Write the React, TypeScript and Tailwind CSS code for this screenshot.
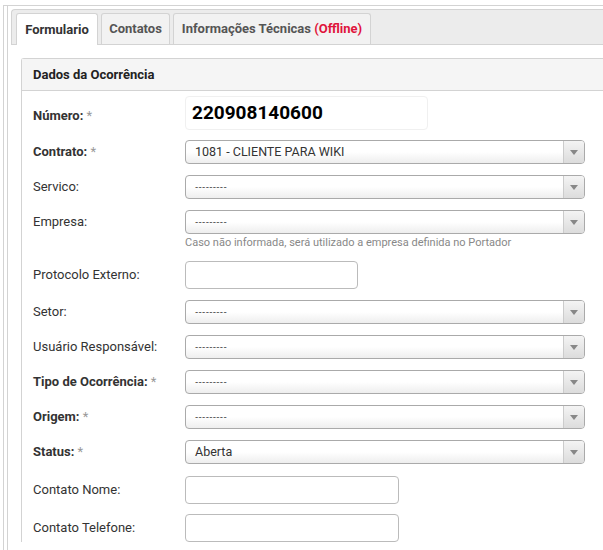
import React from 'react';

type Row = {
  label: string;
  required?: boolean;
  kind: 'select' | 'input';
  value?: string;
  width?: string;
  mt: string;
  help?: string;
};

const rows: Row[] = [
  { label: 'Contrato:', required: true, kind: 'select', value: '1081 - CLIENTE PARA WIKI', mt: 'mt-[10px]' },
  { label: 'Servico:', kind: 'select', value: '---------', mt: 'mt-[11px]' },
  {
    label: 'Empresa:',
    kind: 'select',
    value: '---------',
    mt: 'mt-[11px]',
    help: 'Caso não informada, será utilizado a empresa definida no Portador',
  },
  { label: 'Protocolo Externo:', kind: 'input', width: 'w-[173px]', mt: 'mt-[11px]' },
  { label: 'Setor:', kind: 'select', value: '---------', mt: 'mt-[11px]' },
  { label: 'Usuário Responsável:', kind: 'select', value: '---------', mt: 'mt-[11px]' },
  { label: 'Tipo de Ocorrência:', required: true, kind: 'select', value: '---------', mt: 'mt-[11px]' },
  { label: 'Origem:', required: true, kind: 'select', value: '---------', mt: 'mt-[11px]' },
  { label: 'Status:', required: true, kind: 'select', value: 'Aberta', mt: 'mt-[11px]' },
  { label: 'Contato Nome:', kind: 'input', width: 'w-[214px]', mt: 'mt-[12px]' },
  { label: 'Contato Telefone:', kind: 'input', width: 'w-[214px]', mt: 'mt-[10px]' },
];

function Label({ text, required, extra = '' }: { text: string; required?: boolean; extra?: string }) {
  return (
    <div className={`w-[152px] shrink-0 text-[13px] text-[#333] ${required ? 'font-bold' : ''} ${extra}`}>
      {text}
      {required && <span className="font-normal text-[#999]"> *</span>}
    </div>
  );
}

function Select({ value }: { value: string }) {
  const dashes = value.startsWith('---');
  return (
    <div className="flex h-[24px] w-[400px] items-stretch overflow-hidden rounded-[4px] border border-[#aaa] bg-gradient-to-b from-white from-50% to-[#eee]">
      <div
        className={`flex flex-1 items-center pl-[9px] text-[#333] ${
          dashes ? "pt-[2px] font-['DejaVu_Sans',sans-serif] text-[9px] tracking-[0.3px]" : 'text-[12.5px]'
        }`}
      >
        {value}
      </div>
      <div className="flex w-[21px] items-center justify-center border-l border-[#ccc] bg-gradient-to-b from-[#f4f4f4] to-[#dcdcdc]">
        <svg width="8" height="5" viewBox="0 0 8 5">
          <path d="M0 0 L8 0 L4 5 Z" fill="#888" />
        </svg>
      </div>
    </div>
  );
}

export default function App() {
  return (
    <div className="h-[550px] w-[603px] overflow-hidden bg-white font-['Roboto',sans-serif]">
      <div className="ml-[3px] mt-[5px] h-[600px] border-l border-t border-[#d3d3d3] pl-[3px]">
        <div className="h-full border-l border-[#d3d3d3] pl-[3px] pt-[3px]">
          {/* tabs */}
          <div className="flex h-[36px] items-end gap-[3px] rounded-tl-[4px] border border-r-0 border-[#d3d3d3] bg-[#ececec] pl-[4px]">
            <div className="-mb-px flex h-[32px] w-[82px] items-center justify-center rounded-t-[3px] border border-b-0 border-[#d3d3d3] bg-white text-[13px] font-bold text-[#333]">
              Formulario
            </div>
            <div className="flex h-[31px] w-[69px] items-center justify-center rounded-t-[3px] border border-b-0 border-[#d3d3d3] bg-[#f2f2f2] text-[13px] font-bold text-[#555]">
              Contatos
            </div>
            <div className="flex h-[31px] w-[198px] items-center justify-center rounded-t-[3px] border border-b-0 border-[#d3d3d3] bg-[#f2f2f2] text-[13px] font-bold text-[#555]">
              Informações Técnicas&nbsp;<span className="text-[#e0143c]">(Offline)</span>
            </div>
          </div>

          {/* panel */}
          <div className="ml-[10px] mt-[13px] rounded-tl-[3px] border border-r-0 border-b-0 border-[#d3d3d3]">
            <div className="flex h-[32px] items-center border-b border-[#d3d3d3] bg-[#f5f5f5] pl-[11px] text-[13px] font-bold text-[#222]">
              Dados da Ocorrência
            </div>
            <div className="pl-[11px] pt-[5px]">
              <div className="flex h-[34px] items-center">
                <Label text="Número:" required extra="mt-[6px]" />
                <div className="flex h-[34px] w-[243px] items-center rounded-[4px] border border-[#f0f0f0] pl-[6px] pt-[1px] text-[19px] font-bold text-black">
                  220908140600
                </div>
              </div>
              {rows.map((r) => (
                <div key={r.label} className={r.mt}>
                  <div className="flex items-center">
                    <Label text={r.label} required={r.required} />
                    {r.kind === 'select' ? (
                      <Select value={r.value ?? ''} />
                    ) : (
                      <div className={`h-[28px] ${r.width} rounded-[4px] border border-[#bbb] bg-white`} />
                    )}
                  </div>
                  {r.help && (
                    <div className="ml-[152px] mt-px text-[11px] leading-[15px] text-[#888]">{r.help}</div>
                  )}
                </div>
              ))}
            </div>
          </div>
        </div>
      </div>
    </div>
  );
}
